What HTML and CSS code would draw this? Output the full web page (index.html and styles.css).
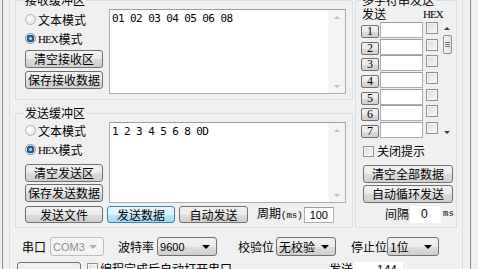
FILE: index.html
```html
<!DOCTYPE html>
<html lang="zh-CN">
<head>
    <meta charset="UTF-8">
    <title>串口助手</title>
    <link rel="stylesheet" href="styles.css">
</head>
<body>
    <div class="tab">
        <div class="panel">
            <div class="upper">
                <div class="left">
                    <!-- 接收缓冲区 -->
                    <div class="group recv">
                        <span class="legend">接收缓冲区</span>
                        <div class="recv-body">
                            <div class="side">
                                <label class="radio"><span class="dot"></span>文本模式</label>
                                <label class="radio"><span class="dot on"></span><span class="lat">HEX</span>模式</label>
                                <button class="btn first">清空接收区</button>
                                <button class="btn">保存接收数据</button>
                            </div>
                            <div class="memo recv-memo">
                                <div class="memo-text">01 02 03 04 05 06 08</div>
                                <div class="vscroll"><span class="arr up"></span><span class="arr down"></span></div>
                            </div>
                        </div>
                    </div>

                    <!-- 发送缓冲区 -->
                    <div class="group send">
                        <span class="legend">发送缓冲区</span>
                        <div class="send-body">
                            <div class="send-top">
                                <div class="side send-side">
                                    <label class="radio"><span class="dot"></span>文本模式</label>
                                    <label class="radio"><span class="dot on"></span><span class="lat">HEX</span>模式</label>
                                    <button class="btn first">清空发送区</button>
                                    <button class="btn">保存发送数据</button>
                                </div>
                                <div class="memo send-memo">
                                    <div class="memo-text">1 2 3 4 5 6 8 0D</div>
                                    <div class="vscroll"><span class="arr up"></span><span class="arr down"></span></div>
                                </div>
                            </div>
                            <div class="send-row">
                                <button class="btn w-file">发送文件</button>
                                <button class="btn w-send default">发送数据</button>
                                <button class="btn w-auto">自动发送</button>
                                <span class="period">周期<span class="ms">(ms)</span></span>
                                <span class="edit period-edit">100</span>
                            </div>
                        </div>
                    </div>
                </div>

                <!-- 多字符串发送 -->
                <div class="group multi">
                    <span class="legend">多字符串发送</span>
                    <div class="multi-body">
                        <div class="multi-head">
                            <span>发送</span>
                            <span class="lat hex-head">HEX</span>
                        </div>
                        <div class="list">
                            <div class="rows">
                                <div class="row"><button class="btn num">1</button><span class="edit line"></span><span class="check"></span></div>
                                <div class="row"><button class="btn num">2</button><span class="edit line"></span><span class="check"></span></div>
                                <div class="row"><button class="btn num">3</button><span class="edit line"></span><span class="check"></span></div>
                                <div class="row"><button class="btn num">4</button><span class="edit line"></span><span class="check"></span></div>
                                <div class="row"><button class="btn num">5</button><span class="edit line"></span><span class="check"></span></div>
                                <div class="row"><button class="btn num">6</button><span class="edit line"></span><span class="check"></span></div>
                                <div class="row"><button class="btn num">7</button><span class="edit line"></span><span class="check"></span></div>
                            </div>
                            <div class="list-scroll">
                                <span class="arr up dark"></span>
                                <span class="thumb"></span>
                                <span class="arr down dark"></span>
                            </div>
                        </div>
                        <label class="check-label"><span class="check"></span>关闭提示</label>
                        <button class="btn wide first">清空全部数据</button>
                        <button class="btn wide">自动循环发送</button>
                        <div class="gap-row">
                            <span>间隔</span>
                            <span class="edit gap-edit">0</span>
                            <span class="ms">ms</span>
                        </div>
                    </div>
                </div>
            </div>

            <div class="settings">
                <span class="lbl l-port">串口</span>
                <span class="combo c-port disabled"><span class="val">COM3</span><span class="drop"></span></span>
                <span class="lbl l-baud">波特率</span>
                <span class="combo c-baud"><span class="val">9600</span><span class="drop"></span></span>
                <span class="lbl l-parity">校验位</span>
                <span class="combo c-parity"><span class="val cjk">无校验</span><span class="drop"></span></span>
                <span class="lbl l-stop">停止位</span>
                <span class="combo c-stop"><span class="val cjk">1位</span><span class="drop"></span></span>
            </div>

            <div class="prog">
                <button class="btn prog-btn"></button>
                <label class="check-label prog-check"><span class="check"></span>编程完成后自动打开串口</label>
                <span class="lbl l-sent">发送</span>
                <span class="edit sent-edit">144</span>
            </div>
        </div>
    </div>
</body>
</html>
```

FILE: styles.css
```css
* {
    box-sizing: border-box;
}
body {
    margin: 0;
    width: 478px;
    height: 269px;
    overflow: hidden;
    background: #f0f0f0;
    color: #000;
    font: 12px/12px "Noto Sans CJK SC", sans-serif;
}
.lat {
    font-family: "Liberation Serif", serif;
    font-size: 11px;
    letter-spacing: -1px;
    margin-right: 1px;
}

/* frames */
.tab {
    margin-left: 2px;
    width: 469px;
    height: 269px;
    padding-left: 6px;
    border-left: 1px solid #898c95;
    border-right: 1px solid #898c95;
}
.panel {
    width: 454px;
    height: 269px;
    border-left: 1px solid #d5dfe5;
    border-right: 1px solid #d5dfe5;
}
.upper {
    display: flex;
    height: 230px;
    padding-left: 5px;
}
.left {
    width: 338px;
    display: flex;
    flex-direction: column;
}
.group {
    position: relative;
    border: 1px solid #d5dfe5;
    border-radius: 2px;
}
.legend {
    position: absolute;
    top: -7px;
    left: 8px;
    padding: 0 1px;
    background: #f0f0f0;
    line-height: 12px;
}
.recv {
    height: 100px;
}
.send {
    height: 115px;
    margin-top: 13px;
}
.multi {
    width: 102px;
    height: 228px;
    margin-left: 2px;
}
.multi .legend {
    left: 5px;
}

/* common controls */
.btn {
    display: block;
    margin: 0;
    padding: 0;
    height: 18px;
    font: 12px/16px "Noto Sans CJK SC", sans-serif;
    color: #000;
    border: 1px solid #707070;
    border-radius: 3px;
    background: linear-gradient(#f2f2f2 0%, #ebebeb 50%, #dddddd 51%, #cfcfcf 100%);
}
.btn.default {
    border-color: #3c7fb1;
    background: linear-gradient(#eaf6fd 0%, #d9f0fc 50%, #bee6fd 51%, #a7d9f5 100%);
}
.edit {
    display: block;
    background: #fff;
    border: 1px solid #abadb3;
    border-top-color: #9a9ca2;
    font: 11px/14px "Liberation Sans", sans-serif;
}
.radio,
.check-label {
    display: flex;
    align-items: center;
    height: 19px;
    white-space: nowrap;
}
.dot {
    width: 11px;
    height: 11px;
    margin-right: 2px;
    border-radius: 50%;
    border: 1px solid #b4b4b4;
    background: radial-gradient(circle at 40% 35%, #ffffff, #dcdcdc);
}
.dot.on {
    border-color: #8a8a8a;
    background: radial-gradient(circle, #8ad4ff 0 1px, #1d6fb7 2px, #0c3e75 3.5px, #e6e6e6 4px);
}
.check {
    display: block;
    width: 12px;
    height: 12px;
    border: 1px solid #8f8f8f;
    background: linear-gradient(135deg, #dcdcdc, #fbfbfb);
    box-shadow: inset 0 0 0 1px #f4f4f4;
}

/* buffers */
.recv-body {
    display: flex;
    padding: 8px 6px 0 9px;
}
.side {
    width: 78px;
    margin-right: 6px;
    padding-top: 1px;
}
.side .btn {
    width: 78px;
    margin-top: 3px;
}
.side .btn.first {
    margin-top: 2px;
}
.memo {
    display: flex;
    width: 237px;
    background: #fff;
    border: 1px solid #abadb3;
    border-top-color: #9a9ca2;
}
.recv-memo {
    height: 85px;
}
.memo-text {
    flex: 1;
    padding: 3px 2px;
    font: 11px/12px "DejaVu Sans Mono", monospace;
    letter-spacing: -0.6px;
    white-space: pre;
}
.vscroll {
    width: 17px;
    display: flex;
    flex-direction: column;
    justify-content: space-between;
    align-items: center;
    padding: 6px 0 5px;
    background: #f3f3f3;
    border-left: 1px solid #f7f7f7;
}
.arr {
    width: 0;
    height: 0;
    border-left: 3px solid transparent;
    border-right: 3px solid transparent;
}
.arr.up {
    border-bottom: 3px solid #bdbdbd;
}
.arr.down {
    border-top: 3px solid #bdbdbd;
}
.arr.up.dark {
    border-bottom-color: #3c3c3c;
}
.arr.down.dark {
    border-top-color: #3c3c3c;
}

.send-body {
    padding: 8px 6px 0 9px;
}
.send-top {
    display: flex;
    height: 81px;
}
.send-side {
    margin-top: -2px;
}
.send-side .btn.first {
    margin-top: 5px;
}
.send-side .btn {
    margin-top: 2px;
}
.send-memo {
    height: 81px;
}
.send-row {
    display: flex;
    align-items: center;
    margin-top: 3px;
    height: 17px;
}
.send-row .btn {
    height: 17px;
    line-height: 15px;
}
.w-file {
    width: 78px;
}
.w-send {
    width: 68px;
    margin-left: 4px !important;
}
.w-auto {
    width: 69px;
    margin-left: 4px !important;
}
.period {
    margin-left: 9px;
    white-space: nowrap;
}
.ms {
    font: 9px/12px "Liberation Mono", monospace;
}
.period-edit {
    width: 30px;
    height: 16px;
    margin-left: 1px;
    padding-left: 5px;
}

/* multi strings */
.multi-body {
    padding: 7px 0 0 5px;
}
.multi-head {
    display: flex;
    height: 14px;
    padding-left: 1px;
}
.hex-head {
    margin-left: 37px;
}
.list {
    display: flex;
}
.row {
    display: flex;
    align-items: flex-start;
    height: 16.67px;
}
.btn.num {
    width: 18px;
    height: 13px;
    margin-top: 3px;
    margin-right: 1px;
    font: 12px/11px "Liberation Serif", serif;
    border-radius: 2px;
}
.edit.line {
    width: 43px;
    height: 16px;
    margin-right: 3px;
}
.row .check {
    margin-top: 0;
}
.list-scroll {
    width: 12px;
    height: 116px;
    margin-left: 3px;
    display: flex;
    flex-direction: column;
    align-items: center;
    padding-top: 5px;
}
.thumb {
    width: 9px;
    height: 19px;
    margin-top: 5px;
    border: 1px solid #8f8f8f;
    border-radius: 2px;
    background:
        linear-gradient(#6f6f6f, #6f6f6f) 1px 6px / 5px 1px no-repeat,
        linear-gradient(#6f6f6f, #6f6f6f) 1px 8px / 5px 1px no-repeat,
        linear-gradient(#6f6f6f, #6f6f6f) 1px 10px / 5px 1px no-repeat,
        linear-gradient(90deg, #f6f6f6, #e4e4e4);
}
.list-scroll .down {
    margin-top: auto;
    margin-bottom: 4px;
}
.multi-body .check-label {
    margin-top: 6px;
    margin-left: 2px;
    height: 13px;
}
.check-label .check {
    width: 11px;
    height: 11px;
    margin-right: 3px;
}
.btn.wide {
    width: 90px;
    margin-left: 2px;
    margin-top: 2px;
}
.btn.wide.first {
    margin-top: 7px;
}
.gap-row {
    display: flex;
    align-items: center;
    height: 17px;
    margin-top: 3px;
    padding-left: 24px;
}
.gap-edit {
    width: 31px;
    height: 17px;
    margin-left: 1px;
    margin-right: 2px;
    padding-left: 10px;
    font-size: 12px;
    border-color: #fff;
}

/* port settings */
.settings {
    display: flex;
    align-items: center;
    height: 19px;
    margin-top: 7px;
}
.lbl {
    white-space: nowrap;
}
.l-port {
    margin-left: 12px;
}
.combo {
    display: flex;
    align-items: center;
    height: 19px;
    border: 1px solid #707070;
    border-radius: 3px;
    background: linear-gradient(#f2f2f2 0%, #ebebeb 50%, #dddddd 51%, #cfcfcf 100%);
}
.combo .val {
    flex: 1;
    padding-left: 2px;
    font: 11px/12px "Liberation Sans", sans-serif;
}
.combo .val.cjk {
    font: 12px/12px "Noto Sans CJK SC", sans-serif;
}
.drop {
    width: 0;
    height: 0;
    margin-right: 6px;
    border-left: 4px solid transparent;
    border-right: 4px solid transparent;
    border-top: 4px solid #000;
}
.combo.disabled {
    border-color: #bcbcbc;
    background: #f4f4f4;
    color: #8d8d8d;
}
.combo.disabled .drop {
    border-top-color: #b0b0b0;
}
.c-port {
    width: 54px;
    margin-left: 4px;
}
.l-baud {
    margin-left: 14px;
}
.c-baud {
    width: 60px;
    margin-left: 3px;
}
.l-parity {
    margin-left: 21px;
}
.c-parity {
    width: 60px;
    margin-left: 2px;
}
.l-stop {
    margin-left: 15px;
}
.c-stop {
    width: 52px;
}

/* programming row */
.prog {
    display: flex;
    align-items: flex-start;
    margin-top: 6px;
    height: 20px;
}
.prog-btn {
    width: 64px;
    height: 20px;
    margin-left: 7px;
}
.prog-check {
    margin-left: 6px;
    height: 13px;
}
.prog-check .check {
    margin-right: 2px;
}
.l-sent {
    margin-left: 97px;
    margin-top: 1px;
}
.sent-edit {
    width: 49px;
    height: 18px;
    margin-left: 1px;
    padding-right: 5px;
    text-align: right;
    font-size: 12px;
    border-color: #fff;
}
```
